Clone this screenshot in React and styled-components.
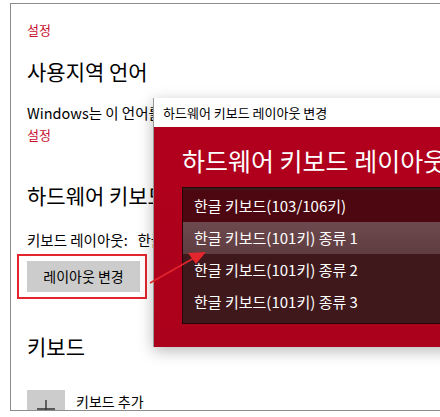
import React from "react";
import styled, { createGlobalStyle } from "styled-components";

const GlobalStyle = createGlobalStyle`
  html, body {
    margin: 0;
    padding: 0;
    background: #ffffff;
    overflow: hidden;
  }
  body {
    font-family: "Noto Sans CJK KR", "Noto Sans", sans-serif;
    color: #000000;
  }
`;

const Screen = styled.div`
  position: relative;
  width: 440px;
  height: 417px;
  overflow: hidden;
`;

const Frame = styled.div`
  margin: 3px 0 0 10px;
  height: 408px;
  box-sizing: border-box;
  border-top: 1px solid #8c8c8c;
  border-left: 1px solid #8c8c8c;
  border-bottom: 1px solid #8c8c8c;
  padding-left: 16px;
  overflow: hidden;
  display: flex;
  flex-direction: column;

  & > * {
    flex-shrink: 0;
  }
`;

const Crumb = styled.div`
  font-size: 13px;
  line-height: 18px;
  color: #c8102e;
  margin-top: ${({ $top }) => $top}px;
`;

const Heading = styled.div`
  font-size: 21px;
  line-height: 30px;
  white-space: nowrap;
  overflow: hidden;
  max-width: ${({ $clip }) => ($clip ? "126px" : "none")};
  margin-top: ${({ $top }) => $top}px;
`;

const Text = styled.div`
  font-size: 14.5px;
  line-height: 22px;
  white-space: pre;
  overflow: hidden;
  max-width: 126px;
  margin-top: ${({ $top }) => $top}px;
`;

const Highlight = styled.div`
  margin: 3px 0 0 -10px;
  width: 130px;
  height: 45px;
  box-sizing: border-box;
  border: 2px solid #e3262d;
  padding: 5px 0 0 8px;
`;

const Button = styled.div`
  width: 113px;
  height: 31px;
  background: #cccccc;
  font-size: 14px;
  line-height: 31px;
  text-align: center;
`;

const AddRow = styled.div`
  display: flex;
  gap: 11px;
  margin-top: 29px;
`;

const AddTile = styled.div`
  width: 38px;
  height: 38px;
  background: #cccccc;
  display: flex;
  align-items: center;
  justify-content: center;
  flex-shrink: 0;
`;

const AddLabel = styled.div`
  font-size: 14px;
  line-height: 18px;
  margin-top: 2px;
`;

const Dialog = styled.div`
  position: absolute;
  left: 153px;
  top: 98px;
  width: 310px;
  box-shadow: 0 4px 14px rgba(0, 0, 0, 0.28);
  border-left: 1px solid #9a9a9a;
`;

const TitleBar = styled.div`
  height: 29px;
  background: #ffffff;
  font-size: 13px;
  line-height: 29px;
  padding-left: 9px;
  white-space: nowrap;
`;

const DialogBody = styled.div`
  height: 220px;
  box-sizing: border-box;
  background: linear-gradient(180deg, #b1001d 0%, #ab001b 100%);
  padding: 16px 0 0 28px;
`;

const DialogTitle = styled.div`
  font-size: 25px;
  line-height: 34px;
  color: #ffffff;
  white-space: nowrap;
  overflow: hidden;
`;

const List = styled.div`
  margin-top: 10px;
  height: 137px;
  box-sizing: border-box;
  border: 1px solid #240709;
  background: #3e181b;
  padding-top: 2px;
`;

const Item = styled.div`
  height: 32px;
  line-height: 32px;
  padding-left: 11px;
  font-size: 15px;
  color: #ffffff;
  white-space: nowrap;
  background: ${({ $variant }) =>
    $variant === "current"
      ? "#4c0710"
      : $variant === "hover"
      ? "linear-gradient(180deg, #6d4a4d 0%, #5e3c40 100%)"
      : "transparent"};
`;

const Arrow = styled.svg`
  position: absolute;
  left: 0;
  top: 0;
  pointer-events: none;
`;

const layouts = [
  { label: "한글 키보드(103/106키)", variant: "current" },
  { label: "한글 키보드(101키) 종류 1", variant: "hover" },
  { label: "한글 키보드(101키) 종류 2" },
  { label: "한글 키보드(101키) 종류 3" },
];

export default function App() {
  return (
    <Screen>
      <GlobalStyle />
      <Frame>
        <Crumb $top={17}>설정</Crumb>
        <Heading $top={17}>사용지역 언어</Heading>
        <Text $top={16}>Windows는 이 언어를 사용하여 앱을 표시합니다</Text>
        <Crumb $top={2}>설정</Crumb>
        <Heading $top={36} $clip>
          하드웨어 키보드 레이아웃
        </Heading>
        <Text $top={19}>{"키보드 레이아웃:   한글 키보드(103/106키)"}</Text>
        <Highlight>
          <Button>레이아웃 변경</Button>
        </Highlight>
        <Heading $top={32}>키보드</Heading>
        <AddRow>
          <AddTile>
            <svg width="20" height="20" viewBox="0 0 20 20">
              <path d="M10 1v18M1 10h18" stroke="#333" strokeWidth="1.4" />
            </svg>
          </AddTile>
          <AddLabel>키보드 추가</AddLabel>
        </AddRow>
      </Frame>

      <Dialog>
        <TitleBar>하드웨어 키보드 레이아웃 변경</TitleBar>
        <DialogBody>
          <DialogTitle>하드웨어 키보드 레이아웃 변경</DialogTitle>
          <List>
            {layouts.map((l) => (
              <Item key={l.label} $variant={l.variant}>
                {l.label}
              </Item>
            ))}
          </List>
        </DialogBody>
      </Dialog>

      <Arrow width="440" height="417" viewBox="0 0 440 417">
        <line x1="150" y1="283" x2="194" y2="258" stroke="#e3262d" strokeWidth="1.5" />
        <polygon points="206,252 188,253 196,264" fill="#e3262d" />
      </Arrow>
    </Screen>
  );
}
